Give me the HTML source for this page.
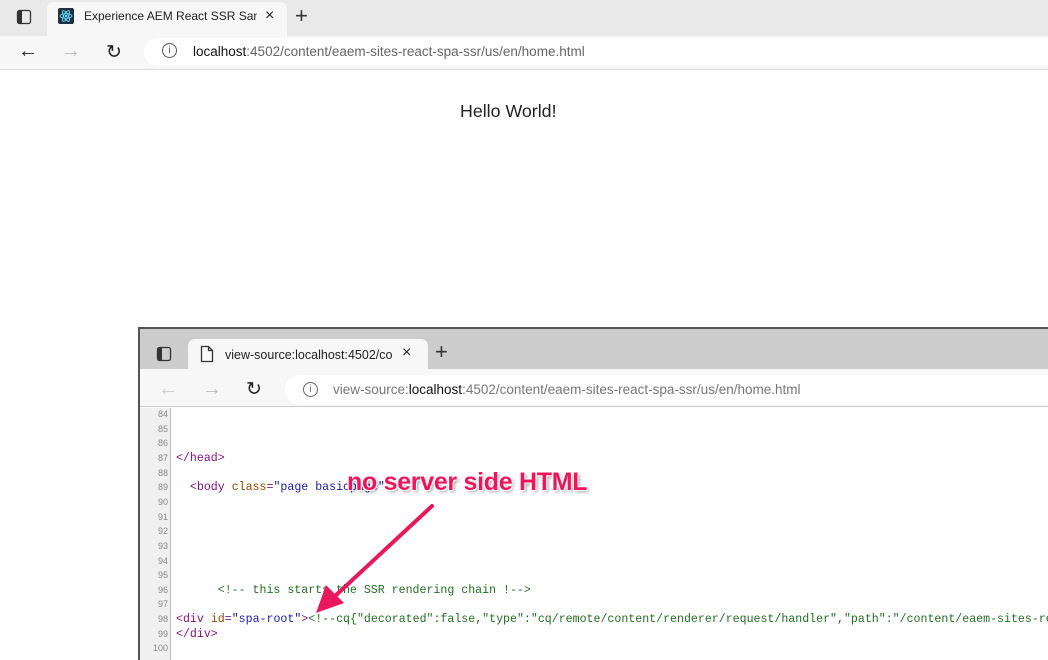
<!DOCTYPE html>
<html><head><style>
*{margin:0;padding:0;box-sizing:border-box}
body{width:1048px;height:660px;overflow:hidden;background:#fff;font-family:"Liberation Sans",sans-serif;position:relative}
.abs{position:absolute}
.code{font-family:"Liberation Mono",monospace;font-size:11.6px;white-space:pre;}
.ln{position:absolute;left:0;width:28px;text-align:right;font-family:"Liberation Sans",sans-serif;font-size:9px;color:#888}
.tag{color:#881280}.attr{color:#994500}.val{color:#1a1aa6}.cm{color:#236e25}
</style></head><body>
<div class="abs" style="left:0;top:0;width:1048px;height:36px;background:#e9e9e9"></div>
<svg class="abs" style="left:16px;top:9px" width="16" height="16"><rect x="1.5" y="1.5" width="13" height="13" rx="2" fill="none" stroke="#333" stroke-width="1.3"/><rect x="2" y="2" width="4" height="12" fill="#333"/></svg>
<div class="abs" style="left:47px;top:2px;width:240px;height:34px;background:#f7f7f7;border-radius:7px 7px 0 0"></div>
<div class="abs" style="left:58px;top:8px;width:16px;height:16px;background:#1f3140;border-radius:2px"></div>
<svg class="abs" style="left:58px;top:8px" width="16" height="16"><g fill="none" stroke="#61dafb" stroke-width="0.9"><ellipse cx="8" cy="8" rx="6" ry="2.3"/><ellipse cx="8" cy="8" rx="6" ry="2.3" transform="rotate(60 8 8)"/><ellipse cx="8" cy="8" rx="6" ry="2.3" transform="rotate(-60 8 8)"/></g><circle cx="8" cy="8" r="1.2" fill="#61dafb"/></svg>
<div class="abs" style="left:84px;top:9px;font-size:12px;color:#222;width:173px;overflow:hidden;white-space:nowrap">Experience AEM React SSR Sample</div>
<div class="abs" style="left:265px;top:7px;font-size:16px;color:#222">×</div>
<div class="abs" style="left:295px;top:3px;font-size:22px;color:#333;font-weight:300">+</div>
<div class="abs" style="left:0;top:36px;width:1048px;height:34px;background:#f7f7f7;border-bottom:1px solid #ddd"></div>
<div class="abs" style="left:18px;top:40px;font-size:20px;color:#222">←</div>
<div class="abs" style="left:61px;top:40px;font-size:20px;color:#bbb">→</div>
<div class="abs" style="left:106px;top:41px;font-size:19px;color:#222">↻</div>
<div class="abs" style="left:144px;top:38px;width:904px;height:28px;background:#fff;border-radius:14px 0 0 14px"></div>
<div class="abs" style="left:162px;top:43px;width:15px;height:15px;border:1.3px solid #555;border-radius:50%;font-size:10px;text-align:center;line-height:13px;color:#555">i</div>
<div class="abs" style="left:193px;top:44px;font-size:13.5px;color:#666"><span style="color:#111">localhost</span>:4502/content/eaem-sites-react-spa-ssr/us/en/home.html</div>
<div class="abs" style="left:460px;top:101px;font-size:17.8px;color:#222">Hello World!</div>

<div class="abs" style="left:138px;top:327px;width:910px;height:333px;border-left:2px solid #555;border-top:2px solid #555;background:#fff;overflow:hidden">
 <div class="abs" style="left:0;top:0;width:910px;height:40px;background:#cccccc"></div>
 <svg class="abs" style="left:16px;top:17px" width="16" height="16"><rect x="1.5" y="1.5" width="13" height="13" rx="2" fill="none" stroke="#333" stroke-width="1.3"/><rect x="2" y="2" width="4" height="12" fill="#333"/></svg>
 <div class="abs" style="left:48px;top:10px;width:240px;height:32px;background:#f7f7f7;border-radius:7px 7px 0 0"></div>
 <svg class="abs" style="left:60px;top:16px" width="14" height="18"><path d="M1.5 1.5h7l4 4v11h-11z M8.5 1.5v4h4" fill="none" stroke="#333" stroke-width="1.3"/></svg>
 <div class="abs" style="left:85px;top:19px;font-size:12.5px;color:#222;width:168px;overflow:hidden;white-space:nowrap">view-source:localhost:4502/content</div>
 <div class="abs" style="left:262px;top:15px;font-size:16px;color:#222">×</div>
 <div class="abs" style="left:295px;top:10px;font-size:22px;color:#333">+</div>
 <div class="abs" style="left:0;top:40px;width:910px;height:38px;background:#f7f7f7;border-bottom:1px solid #ccc"></div>
 <div class="abs" style="left:18px;top:49px;font-size:20px;color:#ccc">←</div>
 <div class="abs" style="left:62px;top:49px;font-size:20px;color:#bbb">→</div>
 <div class="abs" style="left:106px;top:49px;font-size:19px;color:#222">↻</div>
 <div class="abs" style="left:145px;top:46px;width:770px;height:30px;background:#fff;border-radius:15px 0 0 15px"></div>
 <div class="abs" style="left:163px;top:53px;width:15px;height:15px;border:1.3px solid #666;border-radius:50%;font-size:10px;text-align:center;line-height:13px;color:#666">i</div>
 <div class="abs" style="left:193px;top:53px;font-size:13.5px;color:#777">view-source:<span style="color:#111">localhost</span>:4502/content/eaem-sites-react-spa-ssr/us/en/home.html</div>
 <div class="abs" style="left:0;top:79px;width:31px;height:260px;background:#f0f0f0;border-right:1px solid #bbb"></div>
 <div class="abs" style="left:0;top:80px;width:910px">
  <div class="ln" style="top:0">84</div><div class="ln" style="top:14.65px">85</div><div class="ln" style="top:29.3px">86</div><div class="ln" style="top:43.95px">87</div><div class="ln" style="top:58.6px">88</div><div class="ln" style="top:73.25px">89</div><div class="ln" style="top:87.9px">90</div><div class="ln" style="top:102.55px">91</div><div class="ln" style="top:117.2px">92</div><div class="ln" style="top:131.85px">93</div><div class="ln" style="top:146.5px">94</div><div class="ln" style="top:161.15px">95</div><div class="ln" style="top:175.8px">96</div><div class="ln" style="top:190.45px">97</div><div class="ln" style="top:205.1px">98</div><div class="ln" style="top:219.75px">99</div><div class="ln" style="top:234.4px">100</div>
  <div class="abs code" style="left:36px;top:43px"><span class="tag">&lt;/head&gt;</span></div>
  <div class="abs code" style="left:36px;top:72px">  <span class="tag">&lt;body</span> <span class="attr">class</span><span class="tag">=</span><span class="val">"page basicpage"</span></div>
  <div class="abs code" style="left:36px;top:175px" ><span class="cm">      &lt;!-- this starts the SSR rendering chain !--&gt;</span></div>
  <div class="abs code" style="left:36px;top:204px"><span class="tag">&lt;div</span> <span class="attr">id</span><span class="tag">=</span><span class="val">"spa-root"</span><span class="tag">&gt;</span><span class="cm">&lt;!--cq{"decorated":false,"type":"cq/remote/content/renderer/request/handler","path":"/content/eaem-sites-react-spa-ssr</span></div>
  <div class="abs code" style="left:36px;top:219px"><span class="tag">&lt;/div&gt;</span></div>
 </div>
</div>

<svg class="abs" style="left:0;top:0" width="1048" height="660">
 <line x1="432" y1="506" x2="334" y2="597" stroke="#e8185a" stroke-width="4" stroke-linecap="round"/>
 <polygon points="316,613 326,585 344,603" fill="#e8185a"/>
</svg>
<div class="abs" style="left:347px;top:468px;font-size:25px;font-weight:bold;color:#f0145a;letter-spacing:-0.3px;text-shadow:1px 1px 0 #fff,-1px -1px 0 #fff,1px -1px 0 #fff,-1px 1px 0 #fff,2px 2px 3px rgba(0,0,0,.4);white-space:nowrap">no server side HTML</div>
</body></html>
